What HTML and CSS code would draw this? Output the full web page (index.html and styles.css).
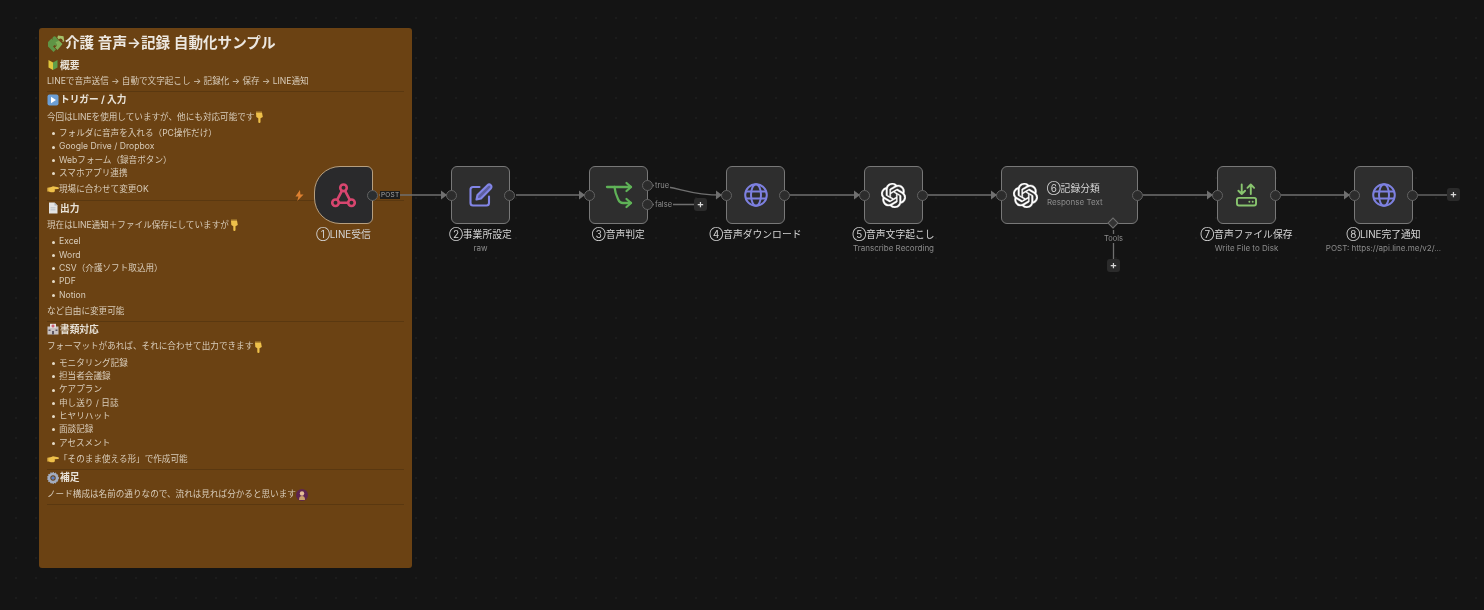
FILE: index.html
```html
<!DOCTYPE html>
<html lang="ja">
<head>
<meta charset="utf-8">
<title>介護 音声→記録 自動化サンプル</title>
<link rel="stylesheet" href="styles.css">
</head>
<body>
<svg class="defs" width="0" height="0" aria-hidden="true">
  <defs>
    <symbol id="openai" viewBox="0 0 24 24"><path fill="#fff" stroke="#fff" stroke-width=".35" d="M22.2819 9.8211a5.9847 5.9847 0 0 0-.5157-4.9108 6.0462 6.0462 0 0 0-6.5098-2.9A6.0651 6.0651 0 0 0 4.9807 4.1818a5.9847 5.9847 0 0 0-3.9977 2.9 6.0462 6.0462 0 0 0 .7427 7.0966 5.98 5.98 0 0 0 .511 4.9107 6.051 6.051 0 0 0 6.5146 2.9001A5.9847 5.9847 0 0 0 13.2599 24a6.0557 6.0557 0 0 0 5.7718-4.2058 5.9894 5.9894 0 0 0 3.9977-2.9001 6.0557 6.0557 0 0 0-.7475-7.0729zm-9.022 12.6081a4.4755 4.4755 0 0 1-2.8764-1.0408l.1419-.0804 4.7783-2.7582a.7948.7948 0 0 0 .3927-.6813v-6.7369l2.02 1.1686a.071.071 0 0 1 .038.052v5.5826a4.504 4.504 0 0 1-4.4945 4.4944zm-9.6607-4.1254a4.4708 4.4708 0 0 1-.5346-3.0137l.142.0852 4.783 2.7582a.7712.7712 0 0 0 .7806 0l5.8428-3.3685v2.3324a.0804.0804 0 0 1-.0332.0615L9.74 19.9502a4.4992 4.4992 0 0 1-6.1408-1.6464zM2.3408 7.8956a4.485 4.485 0 0 1 2.3655-1.9728V11.6a.7664.7664 0 0 0 .3879.6765l5.8144 3.3543-2.0201 1.1685a.0757.0757 0 0 1-.071 0l-4.8303-2.7865A4.504 4.504 0 0 1 2.3408 7.872zm16.5963 3.8558L13.1038 8.364 15.1192 7.2a.0757.0757 0 0 1 .071 0l4.8303 2.7913a4.4944 4.4944 0 0 1-.6765 8.1042v-5.6772a.79.79 0 0 0-.407-.667zm2.0107-3.0231l-.142-.0852-4.7735-2.7818a.7759.7759 0 0 0-.7854 0L9.409 9.2297V6.8974a.0662.0662 0 0 1 .0284-.0615l4.8303-2.7866a4.4992 4.4992 0 0 1 6.6802 4.66zM8.3065 12.863l-2.02-1.1638a.0804.0804 0 0 1-.038-.0567V6.0742a4.4992 4.4992 0 0 1 7.3757-3.4537l-.142.0805L8.704 5.459a.7948.7948 0 0 0-.3927.6813zm1.0976-2.3654l2.602-1.4998 2.6069 1.4998v2.9994l-2.5974 1.4997-2.6067-1.4997Z"/></symbol>
    <symbol id="globe" viewBox="0 0 24 24"><g fill="none" stroke="#7d80e0" stroke-width="2"><circle cx="12" cy="12" r="10.8"/><ellipse cx="12" cy="12" rx="5" ry="10.8"/><path d="M2 8.600h20M2 15.400h20"/></g></symbol>
    <symbol id="hand-down" viewBox="0 0 10 12"><path fill="#eec04a" d="M2 1.500h6l.8 4.500-2.300 1.300v3.600a1.100 1.100 0 0 1-2.200 0V7.300L2.300 6z"/><path fill="#b98d34" d="M2 .5h6v1.200H2z"/></symbol>
    <symbol id="hand-right" viewBox="0 0 14 10"><path fill="#eec04a" d="M1 3l4-1 2-.7 6 1.200a.9.9 0 0 1 0 1.800l-4 .3.300 2.400-1.500 1.200H4.500L1 7z"/><path fill="#b98d34" d="M0 3h1.500v4.300H0z"/></symbol>
  </defs>
</svg>

<main class="canvas">
  <section class="sticky">
    <h1 class="note-title">
      <svg class="emoji emoji-title" viewBox="0 0 18 18"><path fill="#5f9445" d="M1 8l3.500-3.500 1.500 1.500a2 2 0 1 1 3-3L10 4.500l2 2-1.500 1.500a2 2 0 1 1-3 3L6 12.500 9 15.500 6.500 18 1 12.500z"/><path fill="#a5c26a" d="M11 1.500l5.500.8.800 5-2 .7a2 2 0 0 0-3.500-2.600l-1.500-1.600z"/><path fill="#7fae55" d="M9 8l3-1.500L15.500 10l-5 6-2.500-2.500 1.500-1.500a2 2 0 0 0-1-3z"/></svg>介護 音声→記録 自動化サンプル
    </h1>
    <h2 class="note-head note-head-first">
      <svg class="emoji" viewBox="0 0 12 12"><path fill="#e0c63c" d="M1.500 1L6 3.500V11L1.500 8.500z"/><path fill="#5f9e4a" d="M10.500 1L6 3.500V11l4.500-2.500z"/></svg>概要
    </h2>
    <p class="note-text">LINEで音声送信 → 自動で文字起こし → 記録化 → 保存 → LINE通知</p>
    <hr class="rule">

    <h2 class="note-head">
      <svg class="emoji" viewBox="0 0 12 12"><rect x=".5" y=".5" width="11" height="11" rx="2" fill="#6c9fd6"/><path fill="#fff" d="M4 2.800l5 3.200-5 3.200z"/></svg>トリガー / 入力
    </h2>
    <p class="note-text">今回はLINEを使用していますが、他にも対応可能です<svg class="emoji-inline"><use href="#hand-down"/></svg></p>
    <ul class="note-list">
      <li>フォルダに音声を入れる（PC操作だけ）</li>
      <li>Google Drive / Dropbox</li>
      <li>Webフォーム（録音ボタン）</li>
      <li>スマホアプリ連携</li>
    </ul>
    <p class="note-text note-after"><svg class="emoji-wide"><use href="#hand-right"/></svg>現場に合わせて変更OK</p>
    <hr class="rule">

    <h2 class="note-head">
      <svg class="emoji" viewBox="0 0 12 12"><path fill="#e4e4e4" d="M2 .5h5.500L10.500 3.500V11.500H2z"/><path fill="#a8b4c0" d="M7.500.5v3h3zM3.500 5.500h5v.8h-5zM3.500 7.500h5v.8h-5z"/></svg>出力
    </h2>
    <p class="note-text">現在はLINE通知＋ファイル保存にしていますが<svg class="emoji-inline"><use href="#hand-down"/></svg></p>
    <ul class="note-list">
      <li>Excel</li>
      <li>Word</li>
      <li>CSV（介護ソフト取込用）</li>
      <li>PDF</li>
      <li>Notion</li>
    </ul>
    <p class="note-text note-after">など自由に変更可能</p>
    <hr class="rule">

    <h2 class="note-head">
      <svg class="emoji" viewBox="0 0 12 12"><path fill="#c8c2c2" d="M.5 3.500h11V11.500H.5z"/><path fill="#e6e0e0" d="M3 .8h6v4H3z"/><path fill="#c8405a" d="M5.400 1.500h1.200v1h1v1.100h-1v1H5.400v-1h-1V2.500h1z"/><path fill="#5d5560" d="M1.500 6.500h2v1.500h-2zM8.500 6.500h2v1.500h-2zM5 8h2v3.500H5z"/></svg>書類対応
    </h2>
    <p class="note-text">フォーマットがあれば、それに合わせて出力できます<svg class="emoji-inline"><use href="#hand-down"/></svg></p>
    <ul class="note-list">
      <li>モニタリング記録</li>
      <li>担当者会議録</li>
      <li>ケアプラン</li>
      <li>申し送り / 日誌</li>
      <li>ヒヤリハット</li>
      <li>面談記録</li>
      <li>アセスメント</li>
    </ul>
    <p class="note-text note-after"><svg class="emoji-wide"><use href="#hand-right"/></svg>「そのまま使える形」で作成可能</p>
    <hr class="rule">

    <h2 class="note-head">
      <svg class="emoji" viewBox="0 0 12 12"><circle cx="6" cy="6" r="4" fill="none" stroke="#a3adc0" stroke-width="2.600"/><circle cx="6" cy="6" r="1.800" fill="#5d7fc0"/><circle cx="6" cy="6" r="5.300" fill="none" stroke="#a3adc0" stroke-width="1.200" stroke-dasharray="1.300 1.100"/></svg>補足
    </h2>
    <p class="note-text">ノード構成は名前の通りなので、流れは見れば分かると思います<svg class="emoji-inline emoji-person" viewBox="0 0 12 12"><circle cx="6" cy="6" r="6" fill="#5e2550"/><circle cx="6" cy="4.500" r="2.200" fill="#e6bf9a"/><path fill="#c9a06e" d="M3 11c0-3 1-4 3-4s3 1 3 4z"/></svg></p>
    <hr class="rule">
  </section>

  <svg class="edges" width="1484" height="610" viewBox="0 0 1484 610" aria-hidden="true">
    <g fill="none" stroke="#6f6f6f" stroke-width="1.300">
      <path d="M379 195H447"/>
      <path d="M516 195H585"/>
      <path d="M653 185.500C680 186 685 195 722 195"/>
      <path d="M653 204.500H694"/>
      <path d="M790 195H860"/>
      <path d="M928 195H997"/>
      <path d="M1143 195H1213"/>
      <path d="M1281 195H1350"/>
      <path d="M1418 195H1447"/>
      <path d="M1113.500 230V260"/>
    </g>
    <g fill="#6f6f6f">
      <path d="M441 190.500l6 4.500-6 4.500z"/>
      <path d="M579 190.500l6 4.500-6 4.500z"/>
      <path d="M716 190.500l6 4.500-6 4.500z"/>
      <path d="M854 190.500l6 4.500-6 4.500z"/>
      <path d="M991 190.500l6 4.500-6 4.500z"/>
      <path d="M1207 190.500l6 4.500-6 4.500z"/>
      <path d="M1344 190.500l6 4.500-6 4.500z"/>
    </g>
  </svg>

  <svg class="bolt" viewBox="0 0 10 12" aria-hidden="true"><path fill="#dd8030" d="M5.500 0L.5 7h3.300L2.500 12 9.500 4.800H6z"/></svg>

  <article class="node node-trigger node-1">
    <div class="node-box">
      <svg class="icon icon-hook" viewBox="0 0 26 26"><g fill="none" stroke="#d8466f" stroke-width="2.700" stroke-linecap="round"><circle cx="13" cy="5" r="3.400"/><circle cx="4.700" cy="20.500" r="3.400"/><circle cx="21.300" cy="20.500" r="3.400"/><path d="M11.200 8.400L6.800 16.800M14.800 8.400l4.400 8.400M8.500 20.500h9"/></g></svg>
      <span class="port port-out"></span>
    </div>
    <div class="caption">①LINE受信</div>
    <span class="edge-tag edge-post">POST</span>
  </article>

  <article class="node node-2">
    <div class="node-box">
      <svg class="icon icon-edit" viewBox="0 0 24 24"><g fill="none" stroke="#8285e6" stroke-width="2.100" stroke-linecap="round" stroke-linejoin="round"><path d="M10.500 4H4a2.500 2.500 0 0 0-2.500 2.500V20A2.500 2.500 0 0 0 4 22.500h13.500A2.500 2.500 0 0 0 20 20v-6.500"/><path fill="#5d5f9e" d="M18.500 2.200a2.300 2.300 0 0 1 3.300 3.300L12 15.500l-4.500 1 1-4.500z"/></g></svg>
      <span class="port port-in"></span><span class="port port-out"></span>
    </div>
    <div class="caption">②事業所設定</div>
    <div class="subcaption">raw</div>
  </article>

  <article class="node node-3">
    <div class="node-box">
      <svg class="icon icon-switch" viewBox="0 0 26 24"><g fill="none" stroke="#5fb257" stroke-width="2.300" stroke-linecap="round" stroke-linejoin="round"><path d="M1 4H25"/><path d="M8.500 4c.5 5 2 9 3.500 12 1 2.500 2.500 4 5 4h8"/><path d="M20.500 0L25 4 20.500 8M20.500 16L25 20 20.500 24"/></g></svg>
      <span class="port port-true"></span><span class="port port-false"></span>
      <span class="port-in port"></span>
    </div>
    <div class="caption">③音声判定</div>
    <span class="edge-label edge-true">true</span>
    <span class="edge-label edge-false">false</span>
    <span class="plus plus-false">+</span>
  </article>

  <article class="node node-4">
    <div class="node-box">
      <svg class="icon icon-globe"><use href="#globe"/></svg>
      <span class="port port-in"></span><span class="port port-out"></span>
    </div>
    <div class="caption">④音声ダウンロード</div>
  </article>

  <article class="node node-5">
    <div class="node-box">
      <svg class="icon icon-openai"><use href="#openai"/></svg>
      <span class="port port-in"></span><span class="port port-out"></span>
    </div>
    <div class="caption">⑤音声文字起こし</div>
    <div class="subcaption">Transcribe Recording</div>
  </article>

  <article class="node node-wide node-6">
    <div class="node-box node-box-wide">
      <svg class="icon icon-openai"><use href="#openai"/></svg>
      <div class="inner-text">
        <div class="caption-inner">⑥記録分類</div>
        <div class="subcaption-inner">Response Text</div>
      </div>
      <span class="port port-in"></span><span class="port port-out"></span>
      <span class="diamond"></span>
    </div>
    <span class="edge-label edge-tools">Tools</span>
    <span class="plus plus-tools">+</span>
  </article>

  <article class="node node-7">
    <div class="node-box">
      <svg class="icon icon-disk" viewBox="0 0 22 24"><g fill="none" stroke="#88c46e" stroke-width="2" stroke-linecap="round" stroke-linejoin="round"><path d="M6 1v10M2.500 7.500L6 11l3.500-3.500M15.500 11V1M12 4.500L15.500 1 19 4.500"/><rect x="1" y="15" width="20" height="8" rx="2"/></g><path stroke="#88c46e" stroke-width="2" stroke-linecap="round" d="M14 19h.01M17.500 19h.01"/></svg>
      <span class="port port-in"></span><span class="port port-out"></span>
    </div>
    <div class="caption">⑦音声ファイル保存</div>
    <div class="subcaption">Write File to Disk</div>
  </article>

  <article class="node node-8">
    <div class="node-box">
      <svg class="icon icon-globe"><use href="#globe"/></svg>
      <span class="port port-in"></span><span class="port port-out"></span>
    </div>
    <div class="caption">⑧LINE完了通知</div>
    <div class="subcaption">POST: https://api.line.me/v2/...</div>
    <span class="plus plus-end">+</span>
  </article>
</main>
</body>
</html>
```

FILE: styles.css
```css
* { box-sizing: border-box; }

html, body {
  margin: 0;
  padding: 0;
  width: 1484px;
  height: 610px;
  overflow: hidden;
  background: #141414;
}

body {
  font-family: Inter, "Noto Sans CJK JP", "Noto Sans", sans-serif;
  color: #e6e2dc;
}

.defs { position: absolute; }

.canvas {
  position: relative;
  width: 1484px;
  height: 610px;
  background-color: #141414;
  background-image: radial-gradient(circle, #1c1c1c .7px, transparent .9px);
  background-size: 20px 20px;
  background-position: 6px 8px;
  filter: blur(.35px);
}

/* sticky note */
.sticky {
  position: absolute;
  left: 39px;
  top: 28px;
  width: 373px;
  height: 540px;
  padding: 6px 8px 0;
  background: #6b4213;
  border-radius: 3px;
  display: flex;
  flex-direction: column;
  color: #d8ccba;
}

.note-title {
  margin: 0 0 6px;
  height: 18px;
  display: flex;
  align-items: center;
  font-size: 14.600px;
  line-height: 18px;
  font-weight: 600;
  color: #ece7e0;
}

.note-head {
  margin: 0;
  height: 15px;
  display: flex;
  align-items: center;
  font-size: 9.700px;
  line-height: 15px;
  font-weight: 700;
  color: #e8e2d8;
}

.note-head-first { height: 14px; }

.note-text {
  margin: 3.200px 0 0;
  height: 13px;
  display: flex;
  align-items: center;
  font-size: 8.600px;
  line-height: 13px;
  white-space: nowrap;
}

.note-after { margin-top: 3px; }

.note-list {
  margin: 3.600px 0 0;
  padding: 0 0 0 12px;
  list-style: none;
}

.note-list li {
  position: relative;
  height: 13.300px;
  font-size: 8.600px;
  line-height: 13.300px;
  white-space: nowrap;
}

.note-list li::before {
  content: "";
  position: absolute;
  left: -7.500px;
  top: 5.200px;
  width: 3px;
  height: 3px;
  border-radius: 50%;
  background: #e6dcc8;
}

.rule {
  margin: 3.200px 0 0;
  width: 100%;
  height: 1px;
  border: 0;
  background: #5a3810;
  flex: none;
}

.emoji { width: 12px; height: 12px; margin-right: 1px; flex: none; }
.emoji-title { width: 18px; height: 18px; margin-right: 0; }
.emoji-inline { width: 10px; height: 12px; flex: none; }
.emoji-wide { width: 12px; height: 9px; margin-right: 0; flex: none; }
.emoji-person { width: 12px; height: 12px; }

/* canvas overlays */
.edges { position: absolute; left: 0; top: 0; }

.bolt {
  position: absolute;
  left: 295px;
  top: 190px;
  width: 9px;
  height: 11px;
}

.node {
  position: absolute;
  top: 166px;
  width: 59px;
}

.node-1 { left: 314px; }
.node-2 { left: 451px; }
.node-3 { left: 589px; }
.node-4 { left: 726px; }
.node-5 { left: 864px; }
.node-6 { left: 1001px; width: 137px; }
.node-7 { left: 1217px; }
.node-8 { left: 1354px; }

.node-box {
  position: relative;
  width: 100%;
  height: 58px;
  display: flex;
  align-items: center;
  justify-content: center;
  background: #2e2e2e;
  border: 1.300px solid #787878;
  border-radius: 6px;
}

.node-trigger .node-box {
  background: #2a2a2c;
  border-color: #b79f7f;
  border-radius: 26px 6px 6px 26px;
}

.node-box-wide {
  justify-content: flex-start;
  padding-left: 11px;
  gap: 9px;
}

.icon { width: 24px; height: 24px; display: block; flex: none; }
.icon-hook { width: 25px; height: 25px; }
.icon-edit { width: 24px; height: 24px; }
.icon-switch { width: 26px; height: 24px; overflow: visible; }
.icon-disk { width: 21px; height: 24px; }
.icon-globe { width: 24px; height: 24px; }
.icon-openai { width: 25px; height: 25px; }

.port {
  position: absolute;
  width: 11px;
  height: 11px;
  border-radius: 50%;
  background: #2c2c2c;
  border: 1.200px solid #626262;
}

.port-in { left: -6px; top: 22.500px; }
.port-out { right: -6px; top: 22.500px; }
.port-true { right: -6px; top: 13px; }
.port-false { right: -6px; top: 32px; }

.node-trigger .port-out { background: #2a2e30; }

.caption {
  position: absolute;
  top: 61px;
  left: 50%;
  transform: translateX(-50%);
  white-space: nowrap;
  font-size: 9.800px;
  line-height: 15px;
  color: #d4d4d4;
}

.subcaption {
  position: absolute;
  top: 77px;
  left: 50%;
  transform: translateX(-50%);
  white-space: nowrap;
  font-size: 8px;
  line-height: 11px;
  color: #8c8c8c;
}

.inner-text { margin-top: -2px; }

.caption-inner {
  font-size: 9.800px;
  line-height: 15px;
  color: #d4d4d4;
}

.subcaption-inner {
  margin-top: 1px;
  font-size: 8px;
  line-height: 11px;
  color: #8c8c8c;
}

.edge-tag {
  position: absolute;
  left: 66px;
  top: 25px;
  padding: 0 1px;
  font-size: 6.500px;
  line-height: 8px;
  letter-spacing: .2px;
  background: #1c1c1c;
  color: #a5a5a5;
}

.edge-label {
  position: absolute;
  font-size: 7.500px;
  line-height: 9px;
  background: #141414;
  color: #8c8c8c;
  padding: 0 1px;
}

.edge-true { left: 65px; top: 15px; }
.edge-false { left: 65px; top: 34px; }
.edge-tools { left: 102px; top: 68px; padding: 0 1px; }

.plus {
  position: absolute;
  width: 13px;
  height: 13px;
  display: flex;
  align-items: center;
  justify-content: center;
  background: #2b2b2b;
  border-radius: 3px;
  font-size: 11px;
  line-height: 13px;
  font-weight: 600;
  color: #d8d8d8;
}

.plus-false { left: 105px; top: 32px; }
.plus-tools { left: 106px; top: 93px; }
.plus-end { left: 93px; top: 22px; }

.diamond {
  position: absolute;
  left: 107px;
  top: 52px;
  width: 8px;
  height: 8px;
  transform: rotate(45deg);
  background: #333;
  border: 1px solid #6f6f6f;
}
```
